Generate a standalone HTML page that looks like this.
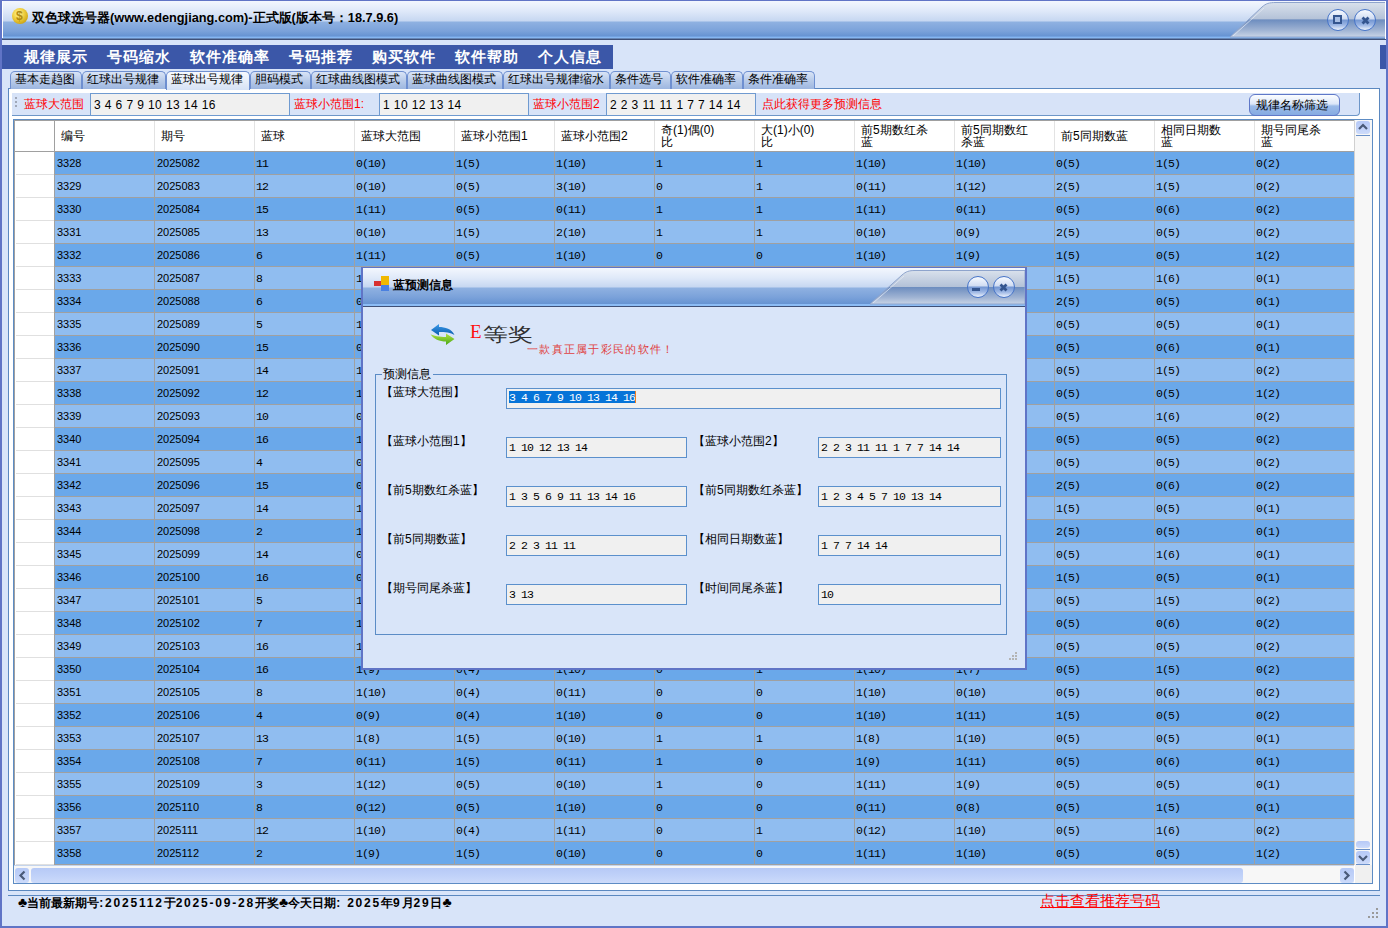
<!DOCTYPE html>
<html><head><meta charset="utf-8"><style>
*{margin:0;padding:0;box-sizing:border-box}
html,body{width:1388px;height:928px;overflow:hidden}
body{position:relative;background:#d8e4f9;font-family:"Liberation Sans",sans-serif;font-size:12px;color:#000}
.a{position:absolute}
/* window frame */
#frameL{left:0;top:0;width:2px;height:928px;background:#6074c6}
#frameR{left:1386px;top:0;width:2px;height:928px;background:#6074c6}
#frameB{left:0;top:926px;width:1388px;height:2px;background:#6074c6}
#frameT{left:0;top:0;width:1388px;height:1px;background:#6074c6}
/* title bar */
#title{left:2px;top:1px;width:1384px;height:39px;
 background:linear-gradient(to bottom,#f3f7fe 0px,#dfe9f9 10px,#c6d7f1 20px,#8fb1e1 21px,#7ba2da 30px,#6693d2 35px,#7fb0ee 36px,#8cbcf5 37px,#3f5077 38px)}
#titleHi{left:2px;top:1px;width:1px;height:37px;background:#ffffff}
#ttext{left:32px;top:10px;font-size:12.75px;font-weight:bold;color:#000;white-space:nowrap}
#coin{left:12px;top:8px;width:16px;height:16px;border-radius:50%;
 background:radial-gradient(circle at 40% 35%,#fff6a0 0,#f0d040 40%,#c9a010 80%,#a08010 100%)}
.tbtn{width:22px;height:22px;border-radius:50%;border:1.6px solid #4674c8;
 background:linear-gradient(to bottom,#f7faff 0,#d0dcf2 45%,#7396d2 50%,#9cb6e4 75%,#eef4fe 100%)}
/* menu */
#menu{left:2px;top:45px;width:611px;height:24px;background:#3b57a8}
#menu span{position:absolute;top:3px;color:#fff;font-weight:bold;font-size:15px;white-space:nowrap;letter-spacing:1px}
#rbar{left:1380px;top:45px;width:6px;height:24px;background:#3b57a8}
/* tabs */
.tab{top:71px;height:18px;border:1px solid #6e8fd0;border-bottom:none;border-radius:5px 5px 0 0;
 background:linear-gradient(to bottom,#d9e4f6 0,#b8cbe9 50%,#9db6e0 100%);font-size:12px;line-height:14px;padding-left:4px;white-space:nowrap}
.tab.sel{background:linear-gradient(to bottom,#f6f9fe 0,#e4ecf8 60%,#d6e2f6 100%)}
#panel{left:8px;top:88px;width:1372px;height:803px;border:1px solid #5b88c0;background:#ffffff}
/* toolbar */
#tool{left:12px;top:93px;width:1348px;height:23px;background:#d7e3f8;border-right:1px solid #6d96c8;border-bottom:1px solid #6d96c8;border-bottom-right-radius:4px}
.lbl{color:#ff0000;font-size:12px;white-space:nowrap}
.fld{height:22px;background:#f0f0f0;border:1px solid #6f9ad0;font-size:12px;line-height:20px;padding-left:3px;padding-top:1px;white-space:nowrap;letter-spacing:0.4px}
#fbtn{left:1249px;top:94px;width:91px;height:22px;border:1px solid #5f78c8;border-radius:6px;
 background:linear-gradient(to bottom,#fbfdff 0,#dce7f8 45%,#9bbbe8 55%,#86abe2 100%);font-size:12px;line-height:20px;text-align:left;padding-left:6px}
/* grid */
#grid{left:13px;top:119px;width:1360px;height:765px;border:1px solid #5d8cc4;background:#ffffff;overflow:hidden}
.ghead{position:absolute;left:0;top:0;width:1341px;height:32px;background:#fff;border-bottom:1px solid #a0a0a0}
.hc{position:absolute;top:0;width:100px;height:31px;border-left:1px solid #e3e3e3;padding-left:6px;padding-top:10px;font-size:12px;white-space:nowrap;line-height:12px}
.hc.two{padding-top:4px}
.row{position:absolute;left:40px;width:1301px;height:23px;border-bottom:1px solid #a0a0a0}
.row.d{background:#6aa8ea}
.row.l{background:#90bdf0}
.row .c{position:absolute;top:0;width:100px;height:22px;border-left:1px solid #a0a0a0;padding-left:1px;padding-top:1px;line-height:22px;font-family:"Liberation Mono",monospace;font-size:11.5px;letter-spacing:-0.9px;white-space:nowrap}
.row .c.s{font-family:"Liberation Sans",sans-serif;font-size:11px;letter-spacing:0;padding-top:0;padding-left:2px}
.rhc{position:absolute;left:2px;width:38px;height:23px;border-bottom:1px solid #e0e0e0;background:#fff}
#vs{left:1340px;top:0;width:18px;height:745px;background:#f7f7f7;border-left:1px solid #d0d0d0}
#hs{left:0;top:745px;width:1340px;height:18px;background:#f7f7f7;border-top:1px solid #c4d4ec}
.sbtn{border-radius:3px;background:linear-gradient(to bottom,#b6c9f6 0,#c2d3f9 60%,#cddbfa 100%)}
/* status */
#sline{left:8px;top:895px;width:1372px;height:1px;background:#5b88c0}
#stext{left:18px;top:894px;font-size:12px;font-weight:bold;white-space:nowrap}
#stext i{font-style:normal;letter-spacing:1.8px}
#slink{left:1040px;top:892px;font-size:14.8px;color:#ff0000;text-decoration:underline;white-space:nowrap}
/* dialog */
#dlg{left:361px;top:267px;width:666px;height:403px;border:2px solid #6074c6;border-top-width:1px;background:#d9e5f9}
#dtitle{left:0;top:0;width:662px;height:39px;background:linear-gradient(to bottom,#f3f7fe 0px,#dfe9f9 10px,#c6d7f1 19px,#8fb1e1 20px,#7ba2da 29px,#6693d2 36px,#8cbcf5 36px,#8cbcf5 38px,#3f5077 38px,#3f5077 39px)}
#group{left:12px;top:106px;width:632px;height:261px;border:1px solid #5b8cc6}
.dl{font-size:12px;white-space:nowrap}
.df{height:21px;background:#f0f0f0;border:1px solid #5b90cc;font-family:"Liberation Mono",monospace;font-size:11.5px;letter-spacing:-0.9px;line-height:19px;padding-left:2px;white-space:pre}

.club{font-size:14px;letter-spacing:0;font-family:"Liberation Sans",sans-serif}

</style></head><body>
<div id="frameT" class="a"></div>
<div id="title" class="a"></div>
<div id="titleHi" class="a"></div>
<div class="a" style="left:1385px;top:1px;width:1px;height:38px;background:#ffffff;z-index:2"></div>
<svg class="a" style="left:1226px;top:1px" width="160" height="38" viewBox="0 0 160 38">
 <defs>
  <linearGradient id="tg" x1="0" y1="0" x2="0" y2="1">
   <stop offset="0" stop-color="#d9e1ec"/><stop offset="0.48" stop-color="#b4c2d8"/>
   <stop offset="0.5" stop-color="#6d8dbf"/><stop offset="0.8" stop-color="#9fb3d3"/><stop offset="1" stop-color="#c9d4e6"/>
  </linearGradient>
 </defs>
 <path d="M4 36 L 36 6 C 40 2.5, 43 1.5, 50 1.5 L 160 1.5 L 160 36 Z" fill="url(#tg)" stroke="#8ea4cc" stroke-width="1"/>
 <path d="M7 35 L 38 7" stroke="#e8eef8" stroke-width="1" opacity="0.7"/>
</svg>
<div class="a tbtn" style="left:1327px;top:9px"><div class="a" style="left:5px;top:5px;width:9px;height:9px;border:2px solid #34558f;background:#a8bfe6"></div></div>
<div class="a tbtn" style="left:1354px;top:9px"><svg class="a" style="left:6px;top:6px" width="9" height="9"><path d="M1.5 1.5 L7.5 7.5 M7.5 1.5 L1.5 7.5" stroke="#34558f" stroke-width="2.8"/></svg></div>
<div id="coin" class="a"><div class="a" style="left:4px;top:0px;font-size:12px;line-height:16px;color:#b08a10;font-weight:bold">$</div></div>
<div id="ttext" class="a">双色球选号器(www.edengjiang.com)-正式版(版本号：18.7.9.6)</div>

<div id="menu" class="a">
 <span style="left:22px">规律展示</span>
 <span style="left:105px">号码缩水</span>
 <span style="left:188px">软件准确率</span>
 <span style="left:287px">号码推荐</span>
 <span style="left:370px">购买软件</span>
 <span style="left:453px">软件帮助</span>
 <span style="left:536px">个人信息</span>
</div>
<div id="rbar" class="a"></div>

<div id="panel" class="a"></div>
<div class="a tab" style="left:10px;width:72px">基本走趋图</div>
<div class="a tab" style="left:82px;width:84px">红球出号规律</div>
<div class="a tab sel" style="left:166px;width:84px;height:19px">蓝球出号规律</div>
<div class="a tab" style="left:250px;width:61px">胆码模式</div>
<div class="a tab" style="left:311px;width:96px">红球曲线图模式</div>
<div class="a tab" style="left:407px;width:96px">蓝球曲线图模式</div>
<div class="a tab" style="left:503px;width:107px">红球出号规律缩水</div>
<div class="a tab" style="left:610px;width:61px">条件选号</div>
<div class="a tab" style="left:671px;width:72px">软件准确率</div>
<div class="a tab" style="left:743px;width:72px">条件准确率</div>

<div id="tool" class="a"></div>
<div class="a" style="left:15px;top:97px;width:2px;height:2px;background:#a0a8b8"></div>
<div class="a" style="left:15px;top:101px;width:2px;height:2px;background:#a0a8b8"></div>
<div class="a" style="left:15px;top:105px;width:2px;height:2px;background:#a0a8b8"></div>
<div class="a lbl" style="left:24px;top:96px">蓝球大范围</div>
<div class="a fld" style="left:90px;top:93px;width:200px;height:23px">3 4 6 7 9 10 13 14 16</div>
<div class="a lbl" style="left:294px;top:96px">蓝球小范围1:</div>
<div class="a fld" style="left:379px;top:93px;width:150px;height:23px">1 10 12 13 14</div>
<div class="a lbl" style="left:533px;top:96px">蓝球小范围2</div>
<div class="a fld" style="left:606px;top:93px;width:150px;height:23px">2 2 3 11 11 1 7 7 14 14</div>
<div class="a lbl" style="left:762px;top:96px">点此获得更多预测信息</div>
<div id="fbtn" class="a">规律名称筛选</div>

<div id="grid" class="a">
<div class="ghead">
<div class="rh" style="left:0;top:0;height:31px"></div>
<div class="hc" style="left:40px;border-left-color:#a0a0a0">编号</div>
<div class="hc" style="left:140px">期号</div>
<div class="hc" style="left:240px">蓝球</div>
<div class="hc" style="left:340px">蓝球大范围</div>
<div class="hc" style="left:440px">蓝球小范围1</div>
<div class="hc" style="left:540px">蓝球小范围2</div>
<div class="hc two" style="left:640px">奇(1)偶(0)<br>比</div>
<div class="hc two" style="left:740px">大(1)小(0)<br>比</div>
<div class="hc two" style="left:840px">前5期数红杀<br>蓝</div>
<div class="hc two" style="left:940px">前5同期数红<br>杀蓝</div>
<div class="hc" style="left:1040px">前5同期数蓝</div>
<div class="hc two" style="left:1140px">相同日期数<br>蓝</div>
<div class="hc two" style="left:1240px">期号同尾杀<br>蓝</div>
</div>
<div class="a" style="left:0;top:0;width:1px;height:745px;background:#a0a0a0"></div>
<div class="a" style="left:0;top:0;width:1341px;height:1px;background:#a0a0a0"></div>
<div class="rhc" style="top:32px"></div>
<div class="row d" style="top:32px">
<div class="c s" style="left:0px">3328</div>
<div class="c s" style="left:100px">2025082</div>
<div class="c" style="left:200px">11</div>
<div class="c" style="left:300px">0(10)</div>
<div class="c" style="left:400px">1(5)</div>
<div class="c" style="left:500px">1(10)</div>
<div class="c" style="left:600px">1</div>
<div class="c" style="left:700px">1</div>
<div class="c" style="left:800px">1(10)</div>
<div class="c" style="left:900px">1(10)</div>
<div class="c" style="left:1000px">0(5)</div>
<div class="c" style="left:1100px">1(5)</div>
<div class="c" style="left:1200px">0(2)</div>
</div>
<div class="rhc" style="top:55px"></div>
<div class="row l" style="top:55px">
<div class="c s" style="left:0px">3329</div>
<div class="c s" style="left:100px">2025083</div>
<div class="c" style="left:200px">12</div>
<div class="c" style="left:300px">0(10)</div>
<div class="c" style="left:400px">0(5)</div>
<div class="c" style="left:500px">3(10)</div>
<div class="c" style="left:600px">0</div>
<div class="c" style="left:700px">1</div>
<div class="c" style="left:800px">0(11)</div>
<div class="c" style="left:900px">1(12)</div>
<div class="c" style="left:1000px">2(5)</div>
<div class="c" style="left:1100px">1(5)</div>
<div class="c" style="left:1200px">0(2)</div>
</div>
<div class="rhc" style="top:78px"></div>
<div class="row d" style="top:78px">
<div class="c s" style="left:0px">3330</div>
<div class="c s" style="left:100px">2025084</div>
<div class="c" style="left:200px">15</div>
<div class="c" style="left:300px">1(11)</div>
<div class="c" style="left:400px">0(5)</div>
<div class="c" style="left:500px">0(11)</div>
<div class="c" style="left:600px">1</div>
<div class="c" style="left:700px">1</div>
<div class="c" style="left:800px">1(11)</div>
<div class="c" style="left:900px">0(11)</div>
<div class="c" style="left:1000px">0(5)</div>
<div class="c" style="left:1100px">0(6)</div>
<div class="c" style="left:1200px">0(2)</div>
</div>
<div class="rhc" style="top:101px"></div>
<div class="row l" style="top:101px">
<div class="c s" style="left:0px">3331</div>
<div class="c s" style="left:100px">2025085</div>
<div class="c" style="left:200px">13</div>
<div class="c" style="left:300px">0(10)</div>
<div class="c" style="left:400px">1(5)</div>
<div class="c" style="left:500px">2(10)</div>
<div class="c" style="left:600px">1</div>
<div class="c" style="left:700px">1</div>
<div class="c" style="left:800px">0(10)</div>
<div class="c" style="left:900px">0(9)</div>
<div class="c" style="left:1000px">2(5)</div>
<div class="c" style="left:1100px">0(5)</div>
<div class="c" style="left:1200px">0(2)</div>
</div>
<div class="rhc" style="top:124px"></div>
<div class="row d" style="top:124px">
<div class="c s" style="left:0px">3332</div>
<div class="c s" style="left:100px">2025086</div>
<div class="c" style="left:200px">6</div>
<div class="c" style="left:300px">1(11)</div>
<div class="c" style="left:400px">0(5)</div>
<div class="c" style="left:500px">1(10)</div>
<div class="c" style="left:600px">0</div>
<div class="c" style="left:700px">0</div>
<div class="c" style="left:800px">1(10)</div>
<div class="c" style="left:900px">1(9)</div>
<div class="c" style="left:1000px">1(5)</div>
<div class="c" style="left:1100px">0(5)</div>
<div class="c" style="left:1200px">1(2)</div>
</div>
<div class="rhc" style="top:147px"></div>
<div class="row l" style="top:147px">
<div class="c s" style="left:0px">3333</div>
<div class="c s" style="left:100px">2025087</div>
<div class="c" style="left:200px">8</div>
<div class="c" style="left:300px">1(10)</div>
<div class="c" style="left:400px">0(5)</div>
<div class="c" style="left:500px">1(10)</div>
<div class="c" style="left:600px">0</div>
<div class="c" style="left:700px">0</div>
<div class="c" style="left:800px">1(10)</div>
<div class="c" style="left:900px">1(9)</div>
<div class="c" style="left:1000px">1(5)</div>
<div class="c" style="left:1100px">1(6)</div>
<div class="c" style="left:1200px">0(1)</div>
</div>
<div class="rhc" style="top:170px"></div>
<div class="row d" style="top:170px">
<div class="c s" style="left:0px">3334</div>
<div class="c s" style="left:100px">2025088</div>
<div class="c" style="left:200px">6</div>
<div class="c" style="left:300px">0(10)</div>
<div class="c" style="left:400px">0(5)</div>
<div class="c" style="left:500px">1(10)</div>
<div class="c" style="left:600px">0</div>
<div class="c" style="left:700px">0</div>
<div class="c" style="left:800px">1(10)</div>
<div class="c" style="left:900px">1(9)</div>
<div class="c" style="left:1000px">2(5)</div>
<div class="c" style="left:1100px">0(5)</div>
<div class="c" style="left:1200px">0(1)</div>
</div>
<div class="rhc" style="top:193px"></div>
<div class="row l" style="top:193px">
<div class="c s" style="left:0px">3335</div>
<div class="c s" style="left:100px">2025089</div>
<div class="c" style="left:200px">5</div>
<div class="c" style="left:300px">1(10)</div>
<div class="c" style="left:400px">0(5)</div>
<div class="c" style="left:500px">1(10)</div>
<div class="c" style="left:600px">0</div>
<div class="c" style="left:700px">0</div>
<div class="c" style="left:800px">1(10)</div>
<div class="c" style="left:900px">1(9)</div>
<div class="c" style="left:1000px">0(5)</div>
<div class="c" style="left:1100px">0(5)</div>
<div class="c" style="left:1200px">0(1)</div>
</div>
<div class="rhc" style="top:216px"></div>
<div class="row d" style="top:216px">
<div class="c s" style="left:0px">3336</div>
<div class="c s" style="left:100px">2025090</div>
<div class="c" style="left:200px">15</div>
<div class="c" style="left:300px">0(10)</div>
<div class="c" style="left:400px">0(5)</div>
<div class="c" style="left:500px">1(10)</div>
<div class="c" style="left:600px">0</div>
<div class="c" style="left:700px">0</div>
<div class="c" style="left:800px">1(10)</div>
<div class="c" style="left:900px">1(9)</div>
<div class="c" style="left:1000px">0(5)</div>
<div class="c" style="left:1100px">0(6)</div>
<div class="c" style="left:1200px">0(1)</div>
</div>
<div class="rhc" style="top:239px"></div>
<div class="row l" style="top:239px">
<div class="c s" style="left:0px">3337</div>
<div class="c s" style="left:100px">2025091</div>
<div class="c" style="left:200px">14</div>
<div class="c" style="left:300px">1(10)</div>
<div class="c" style="left:400px">0(5)</div>
<div class="c" style="left:500px">1(10)</div>
<div class="c" style="left:600px">0</div>
<div class="c" style="left:700px">0</div>
<div class="c" style="left:800px">1(10)</div>
<div class="c" style="left:900px">1(9)</div>
<div class="c" style="left:1000px">0(5)</div>
<div class="c" style="left:1100px">1(5)</div>
<div class="c" style="left:1200px">0(2)</div>
</div>
<div class="rhc" style="top:262px"></div>
<div class="row d" style="top:262px">
<div class="c s" style="left:0px">3338</div>
<div class="c s" style="left:100px">2025092</div>
<div class="c" style="left:200px">12</div>
<div class="c" style="left:300px">1(10)</div>
<div class="c" style="left:400px">0(5)</div>
<div class="c" style="left:500px">1(10)</div>
<div class="c" style="left:600px">0</div>
<div class="c" style="left:700px">0</div>
<div class="c" style="left:800px">1(10)</div>
<div class="c" style="left:900px">1(9)</div>
<div class="c" style="left:1000px">0(5)</div>
<div class="c" style="left:1100px">0(5)</div>
<div class="c" style="left:1200px">1(2)</div>
</div>
<div class="rhc" style="top:285px"></div>
<div class="row l" style="top:285px">
<div class="c s" style="left:0px">3339</div>
<div class="c s" style="left:100px">2025093</div>
<div class="c" style="left:200px">10</div>
<div class="c" style="left:300px">0(10)</div>
<div class="c" style="left:400px">0(5)</div>
<div class="c" style="left:500px">1(10)</div>
<div class="c" style="left:600px">0</div>
<div class="c" style="left:700px">0</div>
<div class="c" style="left:800px">1(10)</div>
<div class="c" style="left:900px">1(9)</div>
<div class="c" style="left:1000px">0(5)</div>
<div class="c" style="left:1100px">1(6)</div>
<div class="c" style="left:1200px">0(2)</div>
</div>
<div class="rhc" style="top:308px"></div>
<div class="row d" style="top:308px">
<div class="c s" style="left:0px">3340</div>
<div class="c s" style="left:100px">2025094</div>
<div class="c" style="left:200px">16</div>
<div class="c" style="left:300px">1(10)</div>
<div class="c" style="left:400px">0(5)</div>
<div class="c" style="left:500px">1(10)</div>
<div class="c" style="left:600px">0</div>
<div class="c" style="left:700px">0</div>
<div class="c" style="left:800px">1(10)</div>
<div class="c" style="left:900px">1(9)</div>
<div class="c" style="left:1000px">0(5)</div>
<div class="c" style="left:1100px">0(5)</div>
<div class="c" style="left:1200px">0(2)</div>
</div>
<div class="rhc" style="top:331px"></div>
<div class="row l" style="top:331px">
<div class="c s" style="left:0px">3341</div>
<div class="c s" style="left:100px">2025095</div>
<div class="c" style="left:200px">4</div>
<div class="c" style="left:300px">0(10)</div>
<div class="c" style="left:400px">0(5)</div>
<div class="c" style="left:500px">1(10)</div>
<div class="c" style="left:600px">0</div>
<div class="c" style="left:700px">0</div>
<div class="c" style="left:800px">1(10)</div>
<div class="c" style="left:900px">1(9)</div>
<div class="c" style="left:1000px">0(5)</div>
<div class="c" style="left:1100px">0(5)</div>
<div class="c" style="left:1200px">0(2)</div>
</div>
<div class="rhc" style="top:354px"></div>
<div class="row d" style="top:354px">
<div class="c s" style="left:0px">3342</div>
<div class="c s" style="left:100px">2025096</div>
<div class="c" style="left:200px">15</div>
<div class="c" style="left:300px">0(10)</div>
<div class="c" style="left:400px">0(5)</div>
<div class="c" style="left:500px">1(10)</div>
<div class="c" style="left:600px">0</div>
<div class="c" style="left:700px">0</div>
<div class="c" style="left:800px">1(10)</div>
<div class="c" style="left:900px">1(9)</div>
<div class="c" style="left:1000px">2(5)</div>
<div class="c" style="left:1100px">0(6)</div>
<div class="c" style="left:1200px">0(2)</div>
</div>
<div class="rhc" style="top:377px"></div>
<div class="row l" style="top:377px">
<div class="c s" style="left:0px">3343</div>
<div class="c s" style="left:100px">2025097</div>
<div class="c" style="left:200px">14</div>
<div class="c" style="left:300px">1(10)</div>
<div class="c" style="left:400px">0(5)</div>
<div class="c" style="left:500px">1(10)</div>
<div class="c" style="left:600px">0</div>
<div class="c" style="left:700px">0</div>
<div class="c" style="left:800px">1(10)</div>
<div class="c" style="left:900px">1(9)</div>
<div class="c" style="left:1000px">1(5)</div>
<div class="c" style="left:1100px">0(5)</div>
<div class="c" style="left:1200px">0(1)</div>
</div>
<div class="rhc" style="top:400px"></div>
<div class="row d" style="top:400px">
<div class="c s" style="left:0px">3344</div>
<div class="c s" style="left:100px">2025098</div>
<div class="c" style="left:200px">2</div>
<div class="c" style="left:300px">1(10)</div>
<div class="c" style="left:400px">0(5)</div>
<div class="c" style="left:500px">1(10)</div>
<div class="c" style="left:600px">0</div>
<div class="c" style="left:700px">0</div>
<div class="c" style="left:800px">1(10)</div>
<div class="c" style="left:900px">1(9)</div>
<div class="c" style="left:1000px">2(5)</div>
<div class="c" style="left:1100px">0(5)</div>
<div class="c" style="left:1200px">0(1)</div>
</div>
<div class="rhc" style="top:423px"></div>
<div class="row l" style="top:423px">
<div class="c s" style="left:0px">3345</div>
<div class="c s" style="left:100px">2025099</div>
<div class="c" style="left:200px">14</div>
<div class="c" style="left:300px">0(10)</div>
<div class="c" style="left:400px">0(5)</div>
<div class="c" style="left:500px">1(10)</div>
<div class="c" style="left:600px">0</div>
<div class="c" style="left:700px">0</div>
<div class="c" style="left:800px">1(10)</div>
<div class="c" style="left:900px">1(9)</div>
<div class="c" style="left:1000px">0(5)</div>
<div class="c" style="left:1100px">1(6)</div>
<div class="c" style="left:1200px">0(1)</div>
</div>
<div class="rhc" style="top:446px"></div>
<div class="row d" style="top:446px">
<div class="c s" style="left:0px">3346</div>
<div class="c s" style="left:100px">2025100</div>
<div class="c" style="left:200px">16</div>
<div class="c" style="left:300px">0(10)</div>
<div class="c" style="left:400px">0(5)</div>
<div class="c" style="left:500px">1(10)</div>
<div class="c" style="left:600px">0</div>
<div class="c" style="left:700px">0</div>
<div class="c" style="left:800px">1(10)</div>
<div class="c" style="left:900px">1(9)</div>
<div class="c" style="left:1000px">1(5)</div>
<div class="c" style="left:1100px">0(5)</div>
<div class="c" style="left:1200px">0(1)</div>
</div>
<div class="rhc" style="top:469px"></div>
<div class="row l" style="top:469px">
<div class="c s" style="left:0px">3347</div>
<div class="c s" style="left:100px">2025101</div>
<div class="c" style="left:200px">5</div>
<div class="c" style="left:300px">1(10)</div>
<div class="c" style="left:400px">0(5)</div>
<div class="c" style="left:500px">1(10)</div>
<div class="c" style="left:600px">0</div>
<div class="c" style="left:700px">0</div>
<div class="c" style="left:800px">1(10)</div>
<div class="c" style="left:900px">1(9)</div>
<div class="c" style="left:1000px">0(5)</div>
<div class="c" style="left:1100px">1(5)</div>
<div class="c" style="left:1200px">0(2)</div>
</div>
<div class="rhc" style="top:492px"></div>
<div class="row d" style="top:492px">
<div class="c s" style="left:0px">3348</div>
<div class="c s" style="left:100px">2025102</div>
<div class="c" style="left:200px">7</div>
<div class="c" style="left:300px">1(10)</div>
<div class="c" style="left:400px">0(5)</div>
<div class="c" style="left:500px">1(10)</div>
<div class="c" style="left:600px">0</div>
<div class="c" style="left:700px">0</div>
<div class="c" style="left:800px">1(10)</div>
<div class="c" style="left:900px">1(9)</div>
<div class="c" style="left:1000px">0(5)</div>
<div class="c" style="left:1100px">0(6)</div>
<div class="c" style="left:1200px">0(2)</div>
</div>
<div class="rhc" style="top:515px"></div>
<div class="row l" style="top:515px">
<div class="c s" style="left:0px">3349</div>
<div class="c s" style="left:100px">2025103</div>
<div class="c" style="left:200px">16</div>
<div class="c" style="left:300px">1(10)</div>
<div class="c" style="left:400px">0(5)</div>
<div class="c" style="left:500px">1(10)</div>
<div class="c" style="left:600px">0</div>
<div class="c" style="left:700px">0</div>
<div class="c" style="left:800px">1(10)</div>
<div class="c" style="left:900px">1(9)</div>
<div class="c" style="left:1000px">0(5)</div>
<div class="c" style="left:1100px">0(5)</div>
<div class="c" style="left:1200px">0(2)</div>
</div>
<div class="rhc" style="top:538px"></div>
<div class="row d" style="top:538px">
<div class="c s" style="left:0px">3350</div>
<div class="c s" style="left:100px">2025104</div>
<div class="c" style="left:200px">16</div>
<div class="c" style="left:300px">1(9)</div>
<div class="c" style="left:400px">0(4)</div>
<div class="c" style="left:500px">1(10)</div>
<div class="c" style="left:600px">0</div>
<div class="c" style="left:700px">1</div>
<div class="c" style="left:800px">1(10)</div>
<div class="c" style="left:900px">1(7)</div>
<div class="c" style="left:1000px">0(5)</div>
<div class="c" style="left:1100px">1(5)</div>
<div class="c" style="left:1200px">0(2)</div>
</div>
<div class="rhc" style="top:561px"></div>
<div class="row l" style="top:561px">
<div class="c s" style="left:0px">3351</div>
<div class="c s" style="left:100px">2025105</div>
<div class="c" style="left:200px">8</div>
<div class="c" style="left:300px">1(10)</div>
<div class="c" style="left:400px">0(4)</div>
<div class="c" style="left:500px">0(11)</div>
<div class="c" style="left:600px">0</div>
<div class="c" style="left:700px">0</div>
<div class="c" style="left:800px">1(10)</div>
<div class="c" style="left:900px">0(10)</div>
<div class="c" style="left:1000px">0(5)</div>
<div class="c" style="left:1100px">0(6)</div>
<div class="c" style="left:1200px">0(2)</div>
</div>
<div class="rhc" style="top:584px"></div>
<div class="row d" style="top:584px">
<div class="c s" style="left:0px">3352</div>
<div class="c s" style="left:100px">2025106</div>
<div class="c" style="left:200px">4</div>
<div class="c" style="left:300px">0(9)</div>
<div class="c" style="left:400px">0(4)</div>
<div class="c" style="left:500px">1(10)</div>
<div class="c" style="left:600px">0</div>
<div class="c" style="left:700px">0</div>
<div class="c" style="left:800px">1(10)</div>
<div class="c" style="left:900px">1(11)</div>
<div class="c" style="left:1000px">1(5)</div>
<div class="c" style="left:1100px">0(5)</div>
<div class="c" style="left:1200px">0(2)</div>
</div>
<div class="rhc" style="top:607px"></div>
<div class="row l" style="top:607px">
<div class="c s" style="left:0px">3353</div>
<div class="c s" style="left:100px">2025107</div>
<div class="c" style="left:200px">13</div>
<div class="c" style="left:300px">1(8)</div>
<div class="c" style="left:400px">1(5)</div>
<div class="c" style="left:500px">0(10)</div>
<div class="c" style="left:600px">1</div>
<div class="c" style="left:700px">1</div>
<div class="c" style="left:800px">1(8)</div>
<div class="c" style="left:900px">1(10)</div>
<div class="c" style="left:1000px">0(5)</div>
<div class="c" style="left:1100px">0(5)</div>
<div class="c" style="left:1200px">0(1)</div>
</div>
<div class="rhc" style="top:630px"></div>
<div class="row d" style="top:630px">
<div class="c s" style="left:0px">3354</div>
<div class="c s" style="left:100px">2025108</div>
<div class="c" style="left:200px">7</div>
<div class="c" style="left:300px">0(11)</div>
<div class="c" style="left:400px">1(5)</div>
<div class="c" style="left:500px">0(11)</div>
<div class="c" style="left:600px">1</div>
<div class="c" style="left:700px">0</div>
<div class="c" style="left:800px">1(9)</div>
<div class="c" style="left:900px">1(11)</div>
<div class="c" style="left:1000px">0(5)</div>
<div class="c" style="left:1100px">0(6)</div>
<div class="c" style="left:1200px">0(1)</div>
</div>
<div class="rhc" style="top:653px"></div>
<div class="row l" style="top:653px">
<div class="c s" style="left:0px">3355</div>
<div class="c s" style="left:100px">2025109</div>
<div class="c" style="left:200px">3</div>
<div class="c" style="left:300px">1(12)</div>
<div class="c" style="left:400px">0(5)</div>
<div class="c" style="left:500px">0(10)</div>
<div class="c" style="left:600px">1</div>
<div class="c" style="left:700px">0</div>
<div class="c" style="left:800px">1(11)</div>
<div class="c" style="left:900px">1(9)</div>
<div class="c" style="left:1000px">0(5)</div>
<div class="c" style="left:1100px">0(5)</div>
<div class="c" style="left:1200px">0(1)</div>
</div>
<div class="rhc" style="top:676px"></div>
<div class="row d" style="top:676px">
<div class="c s" style="left:0px">3356</div>
<div class="c s" style="left:100px">2025110</div>
<div class="c" style="left:200px">8</div>
<div class="c" style="left:300px">0(12)</div>
<div class="c" style="left:400px">0(5)</div>
<div class="c" style="left:500px">1(10)</div>
<div class="c" style="left:600px">0</div>
<div class="c" style="left:700px">0</div>
<div class="c" style="left:800px">0(11)</div>
<div class="c" style="left:900px">0(8)</div>
<div class="c" style="left:1000px">0(5)</div>
<div class="c" style="left:1100px">1(5)</div>
<div class="c" style="left:1200px">0(1)</div>
</div>
<div class="rhc" style="top:699px"></div>
<div class="row l" style="top:699px">
<div class="c s" style="left:0px">3357</div>
<div class="c s" style="left:100px">2025111</div>
<div class="c" style="left:200px">12</div>
<div class="c" style="left:300px">1(10)</div>
<div class="c" style="left:400px">0(4)</div>
<div class="c" style="left:500px">1(11)</div>
<div class="c" style="left:600px">0</div>
<div class="c" style="left:700px">1</div>
<div class="c" style="left:800px">0(12)</div>
<div class="c" style="left:900px">1(10)</div>
<div class="c" style="left:1000px">0(5)</div>
<div class="c" style="left:1100px">1(6)</div>
<div class="c" style="left:1200px">0(2)</div>
</div>
<div class="rhc" style="top:722px"></div>
<div class="row d" style="top:722px">
<div class="c s" style="left:0px">3358</div>
<div class="c s" style="left:100px">2025112</div>
<div class="c" style="left:200px">2</div>
<div class="c" style="left:300px">1(9)</div>
<div class="c" style="left:400px">1(5)</div>
<div class="c" style="left:500px">0(10)</div>
<div class="c" style="left:600px">0</div>
<div class="c" style="left:700px">0</div>
<div class="c" style="left:800px">1(11)</div>
<div class="c" style="left:900px">1(10)</div>
<div class="c" style="left:1000px">0(5)</div>
<div class="c" style="left:1100px">0(5)</div>
<div class="c" style="left:1200px">1(2)</div>
</div>
<div id="vs" class="a">
 <div class="a sbtn" style="left:1px;top:1px;width:14px;height:13px"><svg class="a" style="left:1px;top:2px" width="12" height="8"><path d="M2 6 L6 2 L10 6" stroke="#4a5a78" stroke-width="2.2" fill="none"/></svg></div>
 <div class="a" style="left:1px;top:15px;width:14px;height:1px;background:#6a90c8"></div>
 <div class="a sbtn" style="left:1px;top:721px;width:14px;height:7px"></div>
 <div class="a" style="left:1px;top:729px;width:14px;height:1px;background:#6a90c8"></div>
 <div class="a" style="left:1px;top:744px;width:14px;height:1px;background:#6a90c8"></div>
 <div class="a sbtn" style="left:1px;top:731px;width:14px;height:13px"><svg class="a" style="left:1px;top:3px" width="12" height="8"><path d="M2 2 L6 6 L10 2" stroke="#4a5a78" stroke-width="2.2" fill="none"/></svg></div>
</div>
<div id="hs" class="a">
 <div class="a sbtn" style="left:1px;top:2px;width:14px;height:15px"><svg class="a" style="left:3px;top:2px" width="8" height="11"><path d="M6.5 1.5 L2.5 5.5 L6.5 9.5" stroke="#4a5a78" stroke-width="2.2" fill="none"/></svg></div>
 <div class="a sbtn" style="left:17px;top:2px;width:1212px;height:15px"></div>
 <div class="a sbtn" style="left:1326px;top:2px;width:14px;height:15px"><svg class="a" style="left:3px;top:2px" width="8" height="11"><path d="M1.5 1.5 L5.5 5.5 L1.5 9.5" stroke="#4a5a78" stroke-width="2.2" fill="none"/></svg></div>
</div>
<div class="a" style="left:1341px;top:745px;width:17px;height:18px;background:#f0f0f0"></div>
</div>

<div id="sline" class="a"></div>
<div class="a" style="left:1376px;top:908px;width:2px;height:2px;background:#9a9a9a"></div><div class="a" style="left:1372px;top:912px;width:2px;height:2px;background:#9a9a9a"></div><div class="a" style="left:1376px;top:912px;width:2px;height:2px;background:#9a9a9a"></div><div class="a" style="left:1368px;top:916px;width:2px;height:2px;background:#9a9a9a"></div><div class="a" style="left:1372px;top:916px;width:2px;height:2px;background:#9a9a9a"></div><div class="a" style="left:1376px;top:916px;width:2px;height:2px;background:#9a9a9a"></div>
<div id="stext" class="a"><span class="club">♣</span>当前最新期号<i>:2025112</i>于<i>2025-09-28</i>开奖<span class="club">♣</span>今天日期<i>: 2025</i>年<i>9</i>月<i>29</i>日<span class="club">♣</span></div>
<div id="slink" class="a">点击查看推荐号码</div>

<div id="dlg" class="a">
 <div id="dtitle" class="a"></div>
 <div class="a" style="left:11px;top:8px;width:15px;height:15px">
  <div class="a" style="left:0;top:5px;width:7px;height:5px;background:#d83030"></div>
  <div class="a" style="left:7px;top:0;width:8px;height:9px;background:#f0b800"></div>
  <div class="a" style="left:7px;top:9px;width:8px;height:6px;background:#4a80e0"></div>
 </div>
 <div class="a" style="left:30px;top:9px;font-size:12px;font-weight:bold;white-space:nowrap">蓝预测信息</div>
 <svg class="a" style="left:504px;top:1px" width="158" height="36" viewBox="0 0 158 36">
  <path d="M3 35 L 35 6 C 39 2.5, 42 1.5, 48 1.5 L 158 1.5 L 158 35 Z" fill="url(#tg)" stroke="#8ea4cc" stroke-width="1"/>
  <path d="M6 34 L 37 7" stroke="#e8eef8" stroke-width="1" opacity="0.7"/>
 </svg>
 <div class="a tbtn" style="left:604px;top:8px"><div class="a" style="left:4px;top:11px;width:8px;height:3px;background:#34558f"></div></div>
 <div class="a tbtn" style="left:630px;top:8px"><svg class="a" style="left:5px;top:6px" width="9" height="9"><path d="M1.5 1.5 L7.5 7.5 M7.5 1.5 L1.5 7.5" stroke="#34558f" stroke-width="2.8"/></svg></div>

 <svg class="a" style="left:67px;top:56px" width="26" height="22" viewBox="0 0 26 22">
  <defs><linearGradient id="bl" x1="0" y1="0" x2="0" y2="1"><stop offset="0" stop-color="#3a9ae8"/><stop offset="1" stop-color="#0a5cb0"/></linearGradient>
  <linearGradient id="gr" x1="0" y1="0" x2="0" y2="1"><stop offset="0" stop-color="#b0e040"/><stop offset="1" stop-color="#48a818"/></linearGradient></defs>
  <path d="M1 6 L9 0 L9 3 C15 3, 22 5, 24.5 11 C21 8.5, 15 8, 9 8 L9 11.5 Z" fill="url(#bl)"/>
  <path d="M24.5 15 L16 9.5 L16 13 C10 13, 3 12, 0.5 10 C3 15, 10 17.5, 16 17.5 L16 21 Z" fill="url(#gr)"/>
 </svg>
 <div class="a" style="left:107px;top:52px;font-family:'Liberation Serif',serif;font-size:19px;color:#ff1010;line-height:24px">E</div>
 <div class="a" style="left:120px;top:55px;font-size:19px;color:#303030;line-height:24px;white-space:nowrap;transform:scaleX(1.32);transform-origin:0 0">等奖</div>
 <div class="a" style="left:164px;top:74px;font-size:11px;color:#e04040;white-space:nowrap;letter-spacing:1.3px">一款真正属于彩民的软件！</div>

<div class="a" style="left:652px;top:384px;width:2px;height:2px;background:#b4b4b4"></div><div class="a" style="left:649px;top:387px;width:2px;height:2px;background:#b4b4b4"></div><div class="a" style="left:652px;top:387px;width:2px;height:2px;background:#b4b4b4"></div><div class="a" style="left:646px;top:390px;width:2px;height:2px;background:#b4b4b4"></div><div class="a" style="left:649px;top:390px;width:2px;height:2px;background:#b4b4b4"></div><div class="a" style="left:652px;top:390px;width:2px;height:2px;background:#b4b4b4"></div>
 <div id="group" class="a"></div>
 <div class="a dl" style="left:19px;top:98px;background:#d9e5f9;padding:0 2px 0 1px">预测信息</div>

 <div class="a dl" style="left:18px;top:116px">【蓝球大范围】</div>
 <div class="a df" style="left:143px;top:120px;width:495px"><span class="a" style="left:2px;top:2px;height:12px;line-height:13px;background:#0674d8;color:#fff;padding-right:0">3 4 6 7 9 10 13 14 16</span><span class="a" style="left:128px;top:2px;width:1px;height:12px;background:#f08020"></span></div>

 <div class="a dl" style="left:18px;top:165px">【蓝球小范围1】</div>
 <div class="a df" style="left:143px;top:169px;width:181px">1 10 12 13 14</div>
 <div class="a dl" style="left:330px;top:165px">【蓝球小范围2】</div>
 <div class="a df" style="left:455px;top:169px;width:183px">2 2 3 11 11 1 7 7 14 14</div>

 <div class="a dl" style="left:18px;top:214px">【前5期数红杀蓝】</div>
 <div class="a df" style="left:143px;top:218px;width:181px">1 3 5 6 9 11 13 14 16</div>
 <div class="a dl" style="left:330px;top:214px">【前5同期数红杀蓝】</div>
 <div class="a df" style="left:455px;top:218px;width:183px">1 2 3 4 5 7 10 13 14</div>

 <div class="a dl" style="left:18px;top:263px">【前5同期数蓝】</div>
 <div class="a df" style="left:143px;top:267px;width:181px">2 2 3 11 11</div>
 <div class="a dl" style="left:330px;top:263px">【相同日期数蓝】</div>
 <div class="a df" style="left:455px;top:267px;width:183px">1 7 7 14 14</div>

 <div class="a dl" style="left:18px;top:312px">【期号同尾杀蓝】</div>
 <div class="a df" style="left:143px;top:316px;width:181px">3 13</div>
 <div class="a dl" style="left:330px;top:312px">【时间同尾杀蓝】</div>
 <div class="a df" style="left:455px;top:316px;width:183px">10</div>
</div>

<div id="frameL" class="a"></div>
<div id="frameR" class="a"></div>
<div id="frameB" class="a"></div>

</body></html>
